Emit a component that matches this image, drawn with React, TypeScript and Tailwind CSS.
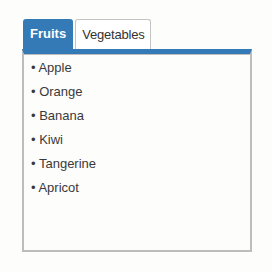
import React, { useState } from "react";

const tabs: Record<string, string[]> = {
  Fruits: ["Apple", "Orange", "Banana", "Kiwi", "Tangerine", "Apricot"],
  Vegetables: ["Carrot", "Potato", "Onion", "Tomato"],
};

export default function App() {
  const [active, setActive] = useState("Fruits");

  return (
    <div className="w-[272px] h-[272px] bg-[#fdfdfb] pl-[22px] pt-[19px] font-['Liberation_Sans',Arial,sans-serif]">
      <div className="w-[230px]">
        <div className="flex gap-[2px] pl-[1px]">
          {Object.keys(tabs).map((name) =>
            name === active ? (
              <button
                key={name}
                onClick={() => setActive(name)}
                className="h-[30px] px-[7px] rounded-t-[3px] bg-[#337ab7] text-white font-bold text-[13px]"
              >
                {name}
              </button>
            ) : (
              <button
                key={name}
                onClick={() => setActive(name)}
                className="h-[30px] px-[6px] rounded-t-[3px] bg-white border border-b-0 border-[#c4c4c4] text-[#333] text-[13px] tracking-[-0.2px]"
              >
                {name}
              </button>
            )
          )}
        </div>
        <div className="h-[203px] border-t-[5px] border-t-[#337ab7] border-x-2 border-b-2 border-x-[#bdbdbd] border-b-[#bdbdbd]">
          <div className="border-t border-[#bdbdbd] pt-[1px] pl-[7px]">
            {tabs[active].map((item) => (
              <div key={item} className="h-[24px] leading-[24px] text-[13px] text-[#3a3a3a]">
                • {item}
              </div>
            ))}
          </div>
        </div>
      </div>
    </div>
  );
}
